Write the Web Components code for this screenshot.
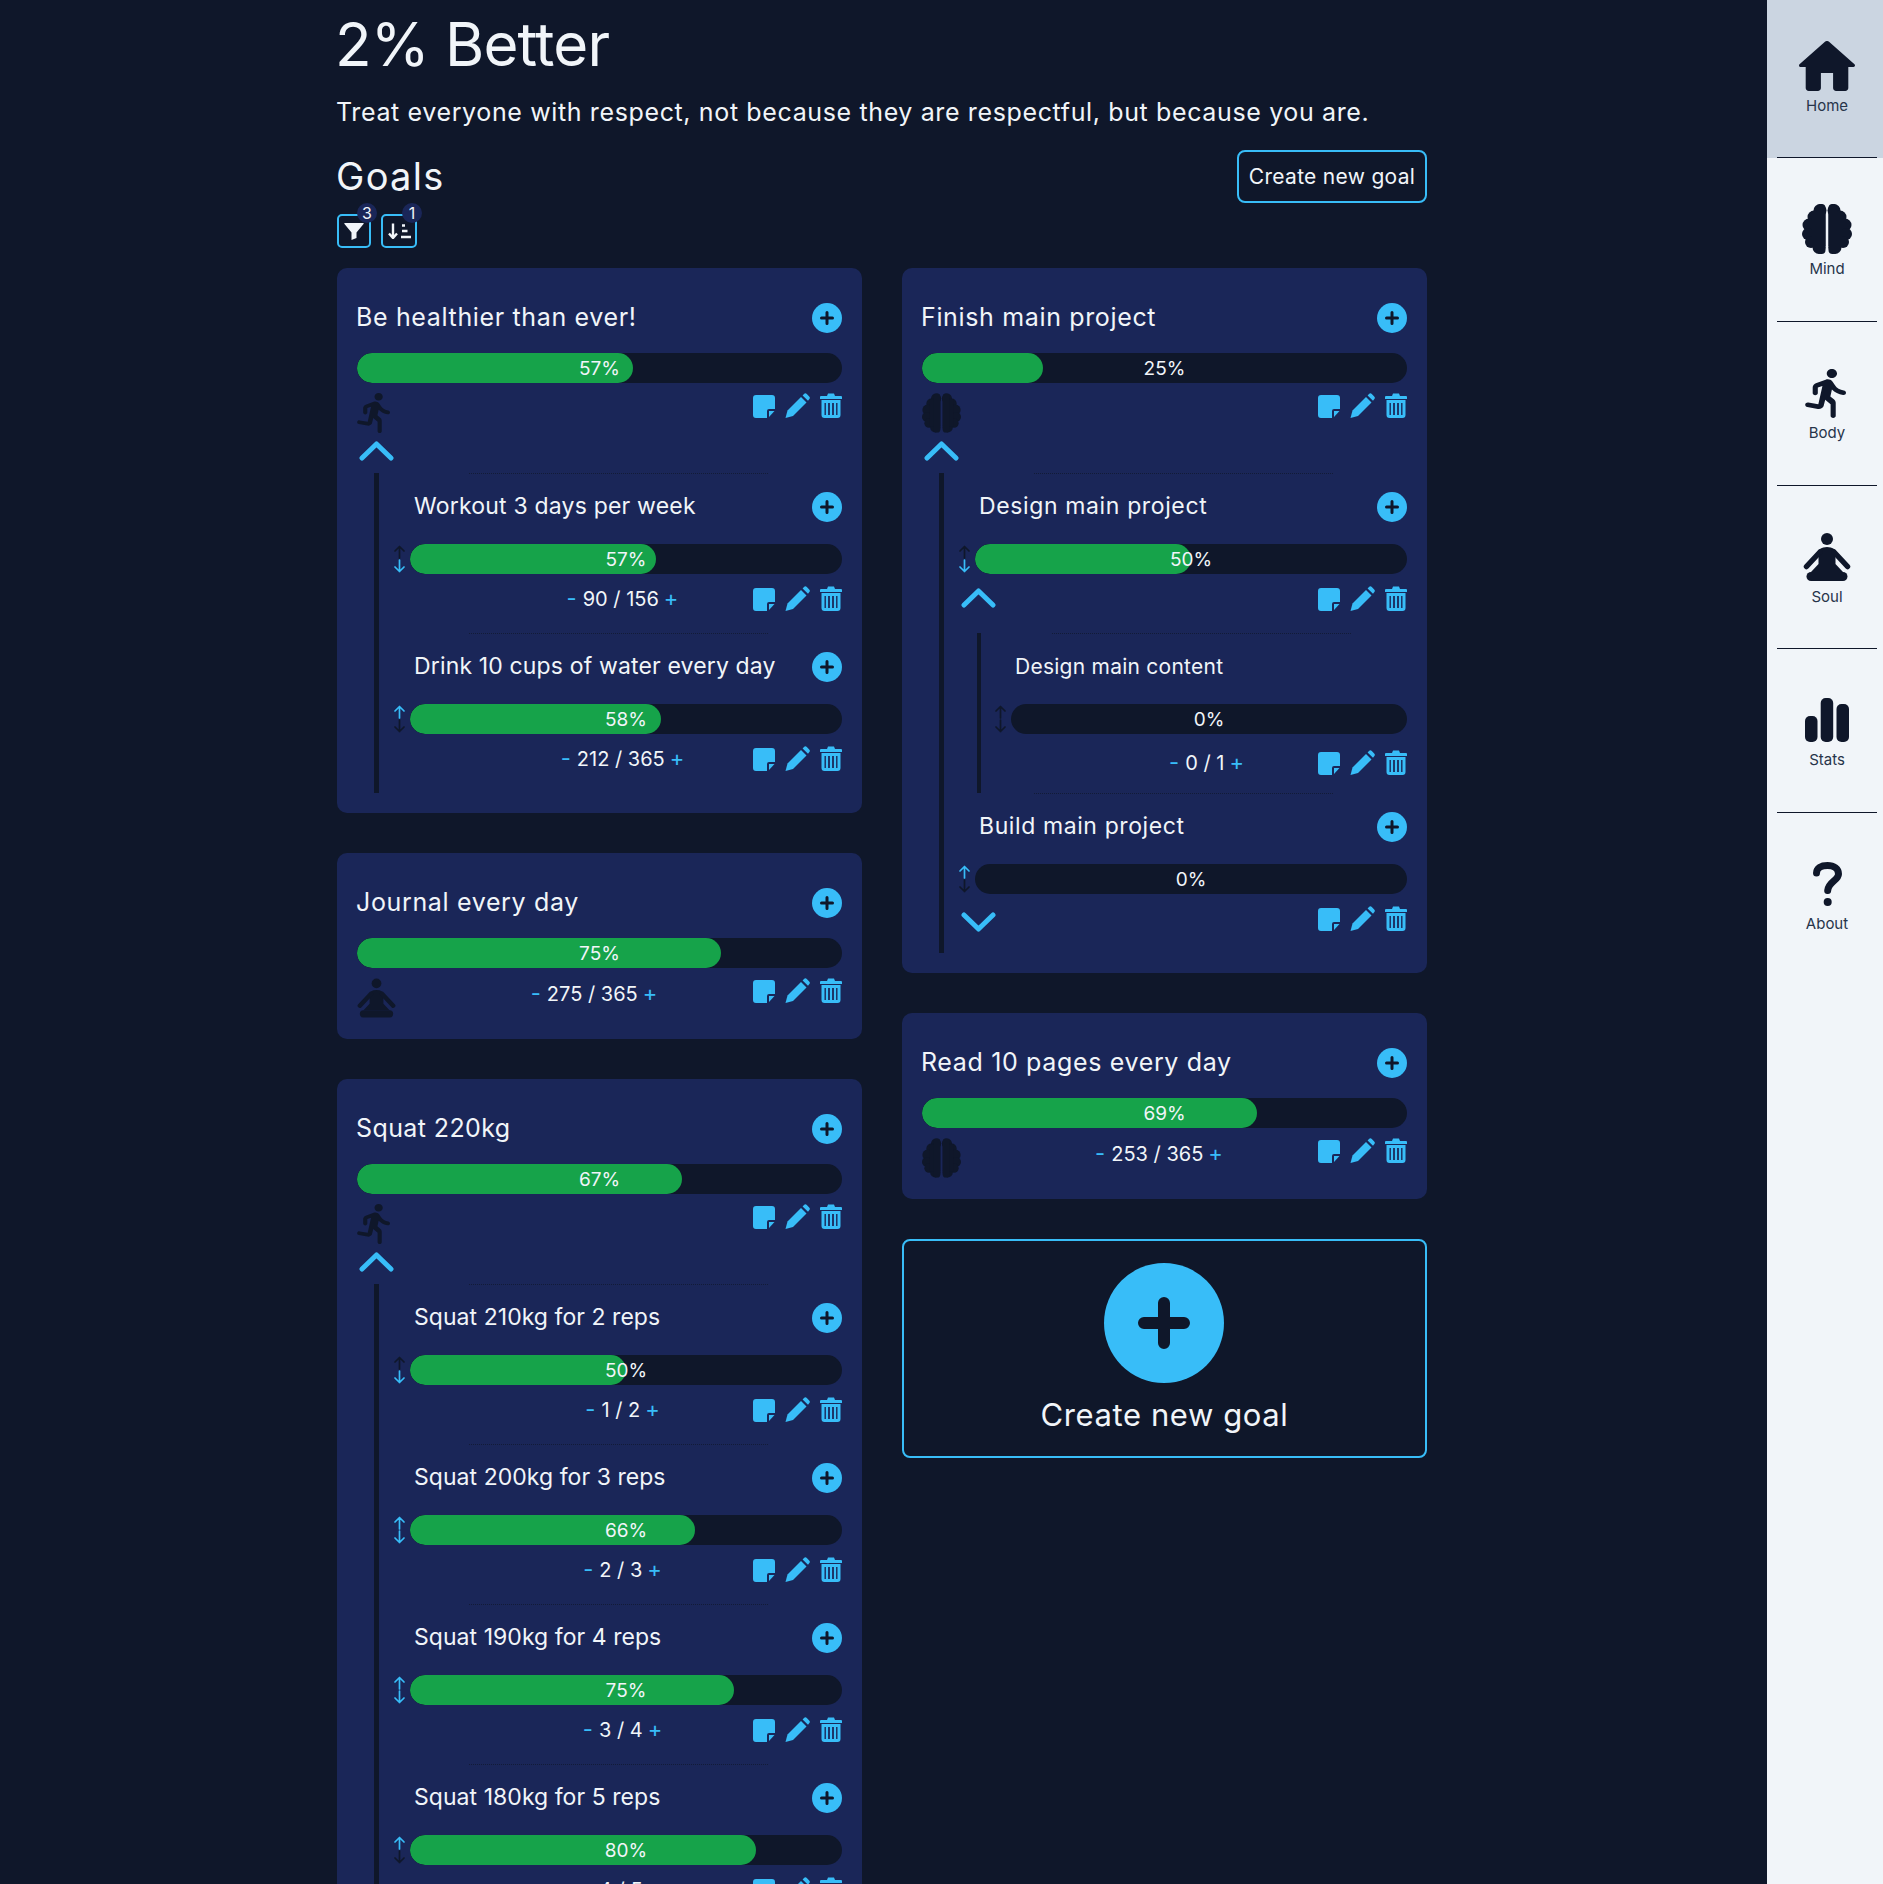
<!DOCTYPE html>
<html lang="en">
<head>
<meta charset="utf-8">
<title>2% Better</title>
<style>
  html, body { margin: 0; height: 1884px; overflow: hidden; background: #0f172a; }
  body { font-family: Inter, "Noto Sans", sans-serif; color: #f1f5f9; }
</style>
</head>
<body>
<app-shell>
  <page-header slot="header" quote="Treat everyone with respect, not because they are respectful, but because you are."></page-header>

  <goal-item slot="left" level="0" name="Be healthier than ever!" pct="57" icon="run" chevron="up">
    <goal-item level="1" name="Workout 3 days per week" track="0.2" pct="57" count="90 / 156" down></goal-item>
    <goal-item level="1" name="Drink 10 cups of water every day" track="0.15" pct="58" count="212 / 365" up></goal-item>
  </goal-item>
  <goal-item slot="left" level="0" name="Journal every day" pct="75" count="275 / 365" icon="soul"></goal-item>
  <goal-item slot="left" level="0" name="Squat 220kg" track="0.4" pct="67" icon="run" chevron="up">
    <goal-item level="1" name="Squat 210kg for 2 reps" pct="50" count="1 / 2" down></goal-item>
    <goal-item level="1" name="Squat 200kg for 3 reps" pct="66" count="2 / 3" up down></goal-item>
    <goal-item level="1" name="Squat 190kg for 4 reps" pct="75" count="3 / 4" up down></goal-item>
    <goal-item level="1" name="Squat 180kg for 5 reps" pct="80" count="4 / 5" up></goal-item>
  </goal-item>

  <goal-item slot="right" level="0" name="Finish main project" pct="25" icon="brain" chevron="up">
    <goal-item level="1" name="Design main project" track="0.63" pct="50" chevron="up" down>
      <goal-item level="2" name="Design main content" pct="0" count="0 / 1" noadd></goal-item>
    </goal-item>
    <goal-item level="1" name="Build main project" track="0.6" pct="0" chevron="down" up></goal-item>
  </goal-item>
  <goal-item slot="right" level="0" name="Read 10 pages every day" pct="69" count="253 / 365" icon="brain"></goal-item>
  <create-card slot="right"></create-card>

  <side-nav slot="nav"></side-nav>
</app-shell>

<script>
const BRAIN_HALF = `<circle cx="18" cy="6.5" r="6.5"/><circle cx="12" cy="13" r="6.5"/><circle cx="7" cy="21" r="6.5"/><circle cx="6" cy="30" r="6"/><circle cx="9" cy="38" r="6"/><circle cx="17" cy="43.5" r="6.5"/><rect x="10" y="8" width="13.5" height="34"/><rect x="15" y="0" width="8.5" height="50" rx="4"/>`;

const ICONS = {
  home: (w, h) => `<svg width="${w}" height="${h}" viewBox="2.8 3.35 18.4 16.65" preserveAspectRatio="none" fill="currentColor"><path d="M10 19v-5h4v5c0 .55.45 1 1 1h3c.55 0 1-.45 1-1v-7h1.7c.46 0 .68-.57.33-.87L12.67 3.6c-.38-.34-.96-.34-1.34 0l-8.36 7.53c-.34.3-.13.87.33.87H5v7c0 .55.45 1 1 1h3c.55 0 1-.45 1-1z"/></svg>`,
  brain: (w, h) => `<svg width="${w}" height="${h}" viewBox="0 0 50 50" fill="currentColor"><g>${BRAIN_HALF}</g><g transform="translate(50 0) scale(-1 1)">${BRAIN_HALF}</g></svg>`,
  run: (w, h) => `<svg width="${w}" height="${h}" viewBox="3 1.48 16 21.5" preserveAspectRatio="none" fill="currentColor"><path d="M13.49 5.48c1.1 0 2-.9 2-2s-.9-2-2-2-2 .9-2 2 .9 2 2 2zm-3.6 13.9l1-4.4 2.1 2v5c0 .55.45 1 1 1s1-.45 1-1v-5.64c0-.55-.22-1.07-.62-1.45L12.9 13.5l.6-3c1.07 1.24 2.62 2.13 4.36 2.41.6.09 1.14-.39 1.14-1 0-.49-.36-.9-.85-.98-1.52-.25-2.78-1.15-3.45-2.33l-1-1.6c-.56-.89-1.68-1.25-2.65-.84L7.22 7.78C6.48 8.1 6 8.82 6 9.63V12c0 .55.45 1 1 1s1-.45 1-1V9.6l1.8-.7-1.6 8.1-3.92-.8c-.54-.11-1.07.24-1.18.78-.11.54.24 1.08.78 1.19l4.11.82c1.06.21 2.1-.46 2.34-1.51z"/></svg>`,
  soul: (w, h) => `<svg width="${w}" height="${h}" viewBox="0 0 48 48" fill="currentColor"><circle cx="24" cy="6" r="6"/><path d="M15.5 20Q15.5 14 24 14T32.5 20V31L40 39H8L15.5 31Z"/><path d="M17 19L3.5 33.5M31 19L44.5 33.5" fill="none" stroke="currentColor" stroke-width="5.5" stroke-linecap="round"/><path d="M8 43.5H40" fill="none" stroke="currentColor" stroke-width="9" stroke-linecap="round"/></svg>`,
  stats: (w, h) => `<svg width="${w}" height="${h}" viewBox="0 0 44 44" fill="currentColor"><rect x="0" y="18" width="12.5" height="26" rx="5"/><rect x="15.7" y="0" width="12.5" height="44" rx="5"/><rect x="31.5" y="6" width="12.5" height="38" rx="5"/></svg>`,
  about: (w, h) => `<svg width="${w}" height="${h}" viewBox="0 0 29 44" fill="currentColor"><path d="M3.5 11C3.5 6 8 3.5 14.5 3.5S25.5 7 25.5 12C25.5 18.500 15.500 19.500 14.700 28.500" fill="none" stroke="currentColor" stroke-width="7" stroke-linecap="round"/><circle cx="14.700" cy="40" r="4"/></svg>`,
  note: `<svg width="22" height="25" viewBox="0 0 22 25" fill="#38bdf8"><path d="M3 2H19A3 3 0 0 1 22 5V16H16A2 2 0 0 0 14 18V25H3A3 3 0 0 1 0 22V5A3 3 0 0 1 3 2Z"/><path d="M16 18H21.500L16 24Z"/></svg>`,
  pencil: `<svg width="25" height="25" viewBox="0 0 25 25" fill="#38bdf8"><path d="M0.500 25L2.500 17.500L16 4L21.500 9.500L8 23Z"/><path d="M17.600 2.400L19 1A2 2 0 0 1 21.800 1L24.200 3.400A2 2 0 0 1 24.200 6.200L23 7.800Z"/></svg>`,
  trash: `<svg width="22" height="25" viewBox="0 0 22 25" fill="#38bdf8"><path d="M7 3L8 .6H14L15 3H21A1 1 0 0 1 22 4V6H0V4A1 1 0 0 1 1 3Z"/><path d="M3 8.500H19V22A1.500 1.500 0 0 1 17.500 23.500H4.500A1.500 1.500 0 0 1 3 22Z" fill="none" stroke="#38bdf8" stroke-width="3"/><path d="M7 10V22M11 10V22M15 10V22" stroke="#38bdf8" stroke-width="2.200"/></svg>`,
  add: `<svg width="30" height="30" viewBox="0 0 30 30"><circle cx="15" cy="15" r="15" fill="#38bdf8"/><path d="M15 9.500V20.500M9.500 15H20.500" stroke="#0f172a" stroke-width="3" stroke-linecap="round"/></svg>`
};

const FONT = `font-family: Inter, "Noto Sans", sans-serif;`;

class AppShell extends HTMLElement {
  connectedCallback() {
    this.attachShadow({ mode: 'open' });
    this.shadowRoot.innerHTML = `
      <style>
        :host { display: flex; height: 1884px; overflow: hidden; }
        .main { width: 1090px; margin-left: 337px; margin-right: 340px; flex: none; }
        .cols { display: grid; grid-template-columns: 525px 525px; gap: 40px; margin-top: 20px; align-items: start; }
        .col { display: flex; flex-direction: column; gap: 40px; }
      </style>
      <div class="main">
        <slot name="header"></slot>
        <div class="cols">
          <div class="col"><slot name="left"></slot></div>
          <div class="col"><slot name="right"></slot></div>
        </div>
      </div>
      <slot name="nav"></slot>
    `;
  }
}

class PageHeader extends HTMLElement {
  connectedCallback() {
    this.attachShadow({ mode: 'open' });
    this.shadowRoot.innerHTML = `
      <style>
        :host { display: block; ${FONT} color: #f1f5f9; }
        h1 { margin: 14px 0 0 -2px; font-size: 60px; line-height: 60px; font-weight: 400; letter-spacing: -0.8px; }
        p { margin: 23px 0 0 -1px; font-size: 25px; line-height: 31px; font-weight: 400; letter-spacing: 0.63px; white-space: nowrap; padding-bottom: 1px; }
        .goals { display: flex; justify-content: space-between; align-items: center; margin-top: 21px; height: 53px; }
        h2 { margin: 0 0 2px -1px; font-size: 38px; font-weight: 400; line-height: 40px; letter-spacing: 1.3px; }
        .new { box-sizing: border-box; height: 53px; width: 190px; border: 2px solid #38bdf8; border-radius: 8px; display: flex; align-items: center; justify-content: center; font-size: 21px; letter-spacing: 0.3px; white-space: nowrap; }
        .tools { display: flex; gap: 10px; margin-top: 11px; }
        .tool { position: relative; box-sizing: border-box; height: 34px; border: 2px solid #38bdf8; border-radius: 5px; display: flex; align-items: center; justify-content: center; }
        .badge { position: absolute; top: -13px; right: -8px; width: 20px; height: 20px; border-radius: 50%; background: #1a2658; font-size: 16px; line-height: 20px; text-align: center; }
        .tool + .tool .badge { right: -7px; }
      </style>
      <h1>2% Better</h1>
      <p>${this.getAttribute('quote')}</p>
      <div class="goals"><h2>Goals</h2><div class="new">Create new goal</div></div>
      <div class="tools">
        <div class="tool" style="width:34px">
          <svg width="20" height="17" viewBox="0 0 20 17" fill="#f1f5f9"><path d="M.8 0H19.200Q20.200 0 19.500 .9L12.500 9.500V15L7.500 17V9.500L.5 .9Q-.2 0 .8 0Z"/></svg>
          <span class="badge">3</span>
        </div>
        <div class="tool" style="width:36px">
          <svg width="23" height="16" viewBox="0 0 23 16" fill="none" stroke="#f1f5f9" stroke-width="2.400"><path d="M5 .5V15M1 10.500L5 15L9 10.500M14 2.500H17M14 8H19.500M13 14H23"/></svg>
          <span class="badge">1</span>
        </div>
      </div>
    `;
  }
}

class ProgressBar extends HTMLElement {
  connectedCallback() {
    this.attachShadow({ mode: 'open' });
    this.shadowRoot.innerHTML = `
      <style>
        :host { display: block; position: relative; height: 30px; border-radius: 15px; background: #0f172a; overflow: hidden; flex: 1; }
        .fill { height: 100%; background: #16a34a; border-radius: 15px; }
        .txt { position: absolute; inset: 0; display: flex; align-items: center; justify-content: center; font-size: 19px; color: #f1f5f9; }
      </style>
      <div class="fill" style="width:${this.getAttribute('pct')}%"></div>
      <div class="txt">${this.getAttribute('pct')}%</div>
    `;
  }
}

class GoalItem extends HTMLElement {
  connectedCallback() {
    const level = Number(this.getAttribute('level'));
    const count = this.getAttribute('count');
    const chevron = this.getAttribute('chevron');
    const icon = this.getAttribute('icon');
    const lead = [78, 98, 100][level];
    const size = [25, 23, 21][level];
    const track = this.getAttribute('track') || [0.65, 0.05, 0.25][level];
    const hasKids = this.children.length > 0;
    const arrowUp = this.hasAttribute('up') ? '#38bdf8' : '#0f172a';
    const arrowDown = this.hasAttribute('down') ? '#38bdf8' : '#0f172a';
    const chevronPath = chevron === 'down' ? 'M3 3L17.500 17L32 3' : 'M3 17L17.500 3L32 17';

    this.attachShadow({ mode: 'open' });
    this.shadowRoot.innerHTML = `
      <style>
        :host { display: block; ${FONT} color: #f1f5f9; }
        :host([level="0"]) { background: #1a2658; border-radius: 10px; padding: 35px 20px 20px; }
        .sep { width: 299px; margin: 0 auto 17px; border-top: 1px dotted rgba(15, 23, 42, .7); }
        .head { display: flex; justify-content: space-between; align-items: center; height: 30px; }
        .name { white-space: nowrap; font-size: ${size}px; letter-spacing: ${track}px; margin-left: ${level === 0 ? -1 : 20}px; margin-bottom: ${level === 0 ? 2 : 0}px; }
        .add { width: 30px; height: 30px; align-self: flex-start; margin-top: ${level === 0 ? 0 : 1}px; }
        .barrow { display: flex; align-items: center; gap: 5px; margin-top: ${level === 0 ? 20 : 23}px; }
        .arrows { width: 11px; height: 28px; }
        .row { display: flex; align-items: flex-start; margin-top: ${level === 0 ? 10 : level === 1 ? 12 : 16}px; margin-bottom: ${level === 0 ? 0 : level === 1 ? 22 : 18}px; ${level === 0 ? 'min-height: 41px;' : 'height: 25px;'} }
        .lead { width: ${lead}px; flex: none; }
        .ico { color: #0f172a; height: 41px; }
        .chev { display: block; margin-left: 2px; margin-top: ${level === 0 ? 7 : chevron === 'down' ? 6 : 2}px; }
        .count { flex: 1; text-align: center; font-size: 20px; line-height: 25px; white-space: nowrap; padding-top: ${level === 0 ? 3 : 0}px; }
        .count b { font-weight: 400; font-size: 22px; color: #38bdf8; }
        .count b:first-child { margin-right: 6px; }
        .count b:last-child { margin-left: 5px; }
        .actions { display: flex; gap: 10px; flex: none; height: 25px; }
        .kids { display: flow-root; border-left: ${level === 0 ? 5 : 4}px solid #0f172a; margin-left: ${level === 0 ? 17 : 18}px; padding-left: ${level === 0 ? 15 : 14}px; margin-top: ${level === 0 ? 12 : 0}px; ${hasKids ? '' : 'display: none;'} }
        svg { display: block; }
      </style>
      ${level > 0 ? '<div class="sep"></div>' : ''}
      <div class="head">
        <div class="name">${this.getAttribute('name')}</div>
        <div class="add">${this.hasAttribute('noadd') ? '' : ICONS.add}</div>
      </div>
      <div class="barrow">
        ${level > 0 ? `<svg class="arrows" viewBox="0 0 11 28" fill="none" stroke-width="1.700" stroke-linecap="round" stroke-linejoin="round"><path stroke="${arrowUp}" d="M5.500 13V1.500M1 6L5.500 1.500L10 6"/><path stroke="${arrowDown}" d="M5.500 15V26.500M1 22L5.500 26.500L10 22"/></svg>` : ''}
        <progress-bar pct="${this.getAttribute('pct')}"></progress-bar>
      </div>
      <div class="row">
        <div class="lead">
          ${icon ? `<div class="ico">${ICONS[icon](icon === 'run' ? 33 : 39, 40)}</div>` : ''}
          ${chevron ? `<svg class="chev" width="35" height="20" viewBox="0 0 35 20" fill="none" stroke="#38bdf8" stroke-width="5" stroke-linecap="round" stroke-linejoin="round"><path d="${chevronPath}"/></svg>` : ''}
        </div>
        <div class="count">${count ? `<b>-</b>${count}<b>+</b>` : ''}</div>
        <div class="actions">${ICONS.note}${ICONS.pencil}${ICONS.trash}</div>
      </div>
      <div class="kids"><slot></slot></div>
    `;
  }
}

class CreateCard extends HTMLElement {
  connectedCallback() {
    this.attachShadow({ mode: 'open' });
    this.shadowRoot.innerHTML = `
      <style>
        :host { display: flex; flex-direction: column; align-items: center; box-sizing: border-box; height: 219px; border: 2px solid #38bdf8; border-radius: 8px; padding-top: 22px; ${FONT} color: #f1f5f9; }
        .txt { margin-top: 13px; font-size: 31px; letter-spacing: 0.6px; line-height: 38px; white-space: nowrap; }
        svg { display: block; margin-right: 1px; }
      </style>
      <svg width="120" height="120" viewBox="0 0 120 120"><circle cx="60" cy="60" r="60" fill="#38bdf8"/><path d="M60 40V80M40 60H80" stroke="#0f172a" stroke-width="12" stroke-linecap="round"/></svg>
      <div class="txt">Create new goal</div>
    `;
  }
}

class SideNav extends HTMLElement {
  connectedCallback() {
    const items = [
      ['Home', ICONS.home(56, 50)],
      ['Mind', ICONS.brain(50, 50)],
      ['Body', `<span style="margin:2px 3px 0 0">${ICONS.run(41, 49)}</span>`],
      ['Soul', ICONS.soul(48, 48)],
      ['Stats', ICONS.stats(44, 44)],
      ['About', ICONS.about(29, 44)]
    ];
    this.attachShadow({ mode: 'open' });
    this.shadowRoot.innerHTML = `
      <style>
        :host { display: block; width: 116px; height: 1890px; margin-top: -5.400px; background: #f1f5f9; color: #0f172a; flex: none; ${FONT} }
        .item { height: 163.700px; box-sizing: border-box; }
        .item.on { background: #cbd5e1; }
        .in { box-sizing: border-box; height: 100%; margin: 0 6px 0 10px; padding-top: 46px; border-bottom: 1px solid #0f172a; text-align: center; }
        .item:last-child .in { border-bottom: 0; }
        .ic { height: 50px; display: flex; align-items: center; justify-content: center; }
        .lb { margin-top: 3px; font-size: 15px; line-height: 24px; color: #27344a; }
        svg { display: block; }
      </style>
      ${items.map(([label, svg], i) => `<div class="item ${i === 0 ? 'on' : ''}"><div class="in"><div class="ic">${svg}</div><div class="lb">${label}</div></div></div>`).join('')}
    `;
  }
}

customElements.define('goal-item', GoalItem);
customElements.define('progress-bar', ProgressBar);
customElements.define('page-header', PageHeader);
customElements.define('create-card', CreateCard);
customElements.define('side-nav', SideNav);
customElements.define('app-shell', AppShell);
</script>
</body>
</html>
